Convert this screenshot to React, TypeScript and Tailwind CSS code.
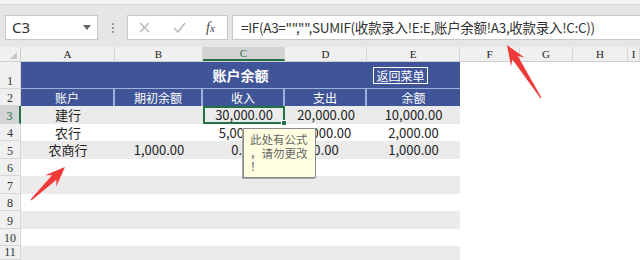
import React from "react";

const COLS = [94, 88, 82, 82, 93, 60, 53, 55, 12];
const LETTERS = ["A", "B", "C", "D", "E", "F", "G", "H", "I"];
const ROWH = [27, 17, 18, 17, 18, 17, 18, 17, 18, 17, 14];

const cjk = { fontFamily: '"Noto Sans CJK SC", "Noto Sans", sans-serif' };
const serif = { fontFamily: '"Liberation Serif", "DejaVu Serif", serif' };

function arrowPoints(tx: number, ty: number, sx: number, sy: number) {
  const dx = tx - sx;
  const dy = ty - sy;
  const len = Math.hypot(dx, dy);
  const ux = dx / len;
  const uy = dy / len;
  const px = -uy;
  const py = ux;
  const headLen = 20;
  const headW = 8;
  const neckW = 3.2;
  const tailW = 0.6;
  const bx = tx - ux * headLen;
  const by = ty - uy * headLen;
  const nx = tx - ux * (headLen - 5);
  const ny = ty - uy * (headLen - 5);
  const pts = [
    [sx + px * tailW, sy + py * tailW],
    [nx + px * neckW, ny + py * neckW],
    [bx + px * headW, by + py * headW],
    [tx, ty],
    [bx - px * headW, by - py * headW],
    [nx - px * neckW, ny - py * neckW],
    [sx - px * tailW, sy - py * tailW],
  ];
  return pts.map((p) => p.map((v) => v.toFixed(1)).join(",")).join(" ");
}

const data: string[][] = [
  ["建行", "", "30,000.00", "20,000.00", "10,000.00"],
  ["农行", "", "5,000.00", "3,000.00", "2,000.00"],
  ["农商行", "1,000.00", "0.00", "0.00", "1,000.00"],
];

export default function App() {
  return (
    <div className="relative w-[640px] h-[260px] overflow-hidden bg-white text-[#222]" style={cjk}>
      {/* ribbon remnant */}
      <div className="h-[5px] bg-[#f4f4f4] border-b border-[#d6d6d6]" />
      {/* formula bar area */}
      <div className="h-[42px] bg-[#e6e6e6] flex items-start pt-[10px]">
        <div className="ml-[5px] w-[93px] h-[25px] bg-white border border-[#c8c8c8] flex items-center justify-between pl-[6px] pr-[6px]">
          <span className="text-[15px] text-[#333]" style={{ fontFamily: '"Noto Sans", sans-serif' }}>C3</span>
          <svg width="8" height="5" viewBox="0 0 8 5"><path d="M0 0 L8 0 L4 5 Z" fill="#666" /></svg>
        </div>
        <div className="w-[29px] h-[25px] flex flex-col items-center justify-center gap-[2px]">
          <div className="w-[2px] h-[2px] bg-[#999]" />
          <div className="w-[2px] h-[2px] bg-[#999]" />
          <div className="w-[2px] h-[2px] bg-[#999]" />
        </div>
        <div className="w-[101px] h-[25px] bg-white border border-[#c8c8c8] flex items-center">
          <svg className="ml-[11px]" width="11" height="11" viewBox="0 0 11 11">
            <path d="M1 1 L10 10 M10 1 L1 10" stroke="#b5b5b5" strokeWidth="1.4" />
          </svg>
          <svg className="ml-[23px]" width="13" height="11" viewBox="0 0 13 11">
            <path d="M1 6 L5 10 L12 1" stroke="#b5b5b5" strokeWidth="1.4" fill="none" />
          </svg>
          <span className="ml-[20px] text-[14px] italic text-[#444]" style={serif}>
            f<span className="text-[11px]">x</span>
          </span>
        </div>
        <div className="ml-[4px] flex-1 h-[25px] bg-white border border-[#c8c8c8] border-r-0 flex items-center pl-[8px]">
          <span className="text-[13.5px] text-[#333] whitespace-nowrap tracking-[-0.3px]">
            =IF(A3="","",SUMIF(收款录入!E:E,账户余额!A3,收款录入!C:C))
          </span>
        </div>
      </div>

      {/* column headers */}
      <div className="flex h-[15px] bg-[#f0f0f0] border-b border-[#cfcfcf]">
        <div className="w-[21px] h-full border-r border-[#cfcfcf] relative">
          <svg className="absolute right-[3px] bottom-[2px]" width="7" height="7" viewBox="0 0 7 7">
            <path d="M7 0 L7 7 L0 7 Z" fill="#c6c6c6" />
          </svg>
        </div>
        {COLS.map((w, i) => (
          <div
            key={i}
            className={
              "h-full flex items-center justify-center text-[11px] leading-none border-r border-[#d6d6d6] " +
              (i === 2 ? "bg-[#d3d3d3] border-b-2 border-b-[#217346] text-[#217346]" : "text-[#222]")
            }
            style={{ width: w, ...serif }}
          >
            {LETTERS[i]}
          </div>
        ))}
      </div>

      {/* rows */}
      {ROWH.map((h, r) => {
        const rowNum = r + 1;
        const stripe = rowNum >= 3 && rowNum % 2 === 1;
        return (
          <div key={r} className="flex" style={{ height: h }}>
            <div
              className={
                "w-[21px] shrink-0 flex items-end justify-center pb-[1px] text-[12px] leading-none border-r border-b border-[#d6d6d6] " +
                (rowNum === 3 ? "bg-[#d3d3d3] border-r-2 border-r-[#217346] text-[#217346]" : "bg-[#f0f0f0] text-[#333]")
              }
              style={serif}
            >
              {rowNum}
            </div>
            {rowNum === 1 && (
              <div className="w-[439px] bg-[#3f5597] flex items-center justify-center relative border-b border-[#9fb2df]">
                <span className="text-[14px] font-bold text-white">账户余额</span>
                <div className="absolute left-[352px] top-[5px] w-[55px] h-[17px] border border-white flex items-center justify-center">
                  <span className="text-[12px] text-white leading-none">返回菜单</span>
                </div>
              </div>
            )}
            {rowNum === 2 &&
              ["账户", "期初余额", "收入", "支出", "余额"].map((t, i) => (
                <div
                  key={i}
                  className={"bg-[#3f5597] flex items-center justify-center text-[12px] text-white " + (i < 4 ? "border-r-2 border-[#9fb2df]" : "")}
                  style={{ width: COLS[i] }}
                >
                  {t}
                </div>
              ))}
            {rowNum >= 3 && (
              <div className={"flex w-[439px] " + (stripe ? "bg-[#ebebeb]" : "bg-white")}>
                {COLS.slice(0, 5).map((w, i) => {
                  const txt = rowNum <= 5 ? data[rowNum - 3][i] : "";
                  const sel = rowNum === 3 && i === 2;
                  return (
                    <div
                      key={i}
                      className={
                        "flex items-center justify-center text-[13px] text-[#222] relative " +
                        (sel ? "border-2 border-[#217346]" : "")
                      }
                      style={{ width: w }}
                    >
                      {txt}
                      {sel && <div className="absolute right-[-4px] bottom-[-4px] w-[6px] h-[6px] bg-[#217346] border border-white" />}
                    </div>
                  );
                })}
              </div>
            )}
            <div className="flex-1 bg-white" />
          </div>
        );
      })}

      {/* comment box */}
      <div
        className="absolute left-[243px] top-[128px] w-[73px] h-[50px] bg-[#ffffe1] border border-[#8a8a8a] pl-[6px] pt-[4px] text-[11.5px] leading-[13.5px] text-[#666] shadow-[-1px_1px_0_#aaa]"
      >
        此处有公式
        <br />
        ，请勿更改
        <br />
        ！
      </div>

      {/* red arrows */}
      <svg className="absolute left-0 top-0 pointer-events-none" width="640" height="260">
        <polygon points={arrowPoints(507, 45, 541, 98)} fill="#f03a3a" />
        <polygon points={arrowPoints(65, 167, 31, 200)} fill="#f03a3a" />
      </svg>
    </div>
  );
}
